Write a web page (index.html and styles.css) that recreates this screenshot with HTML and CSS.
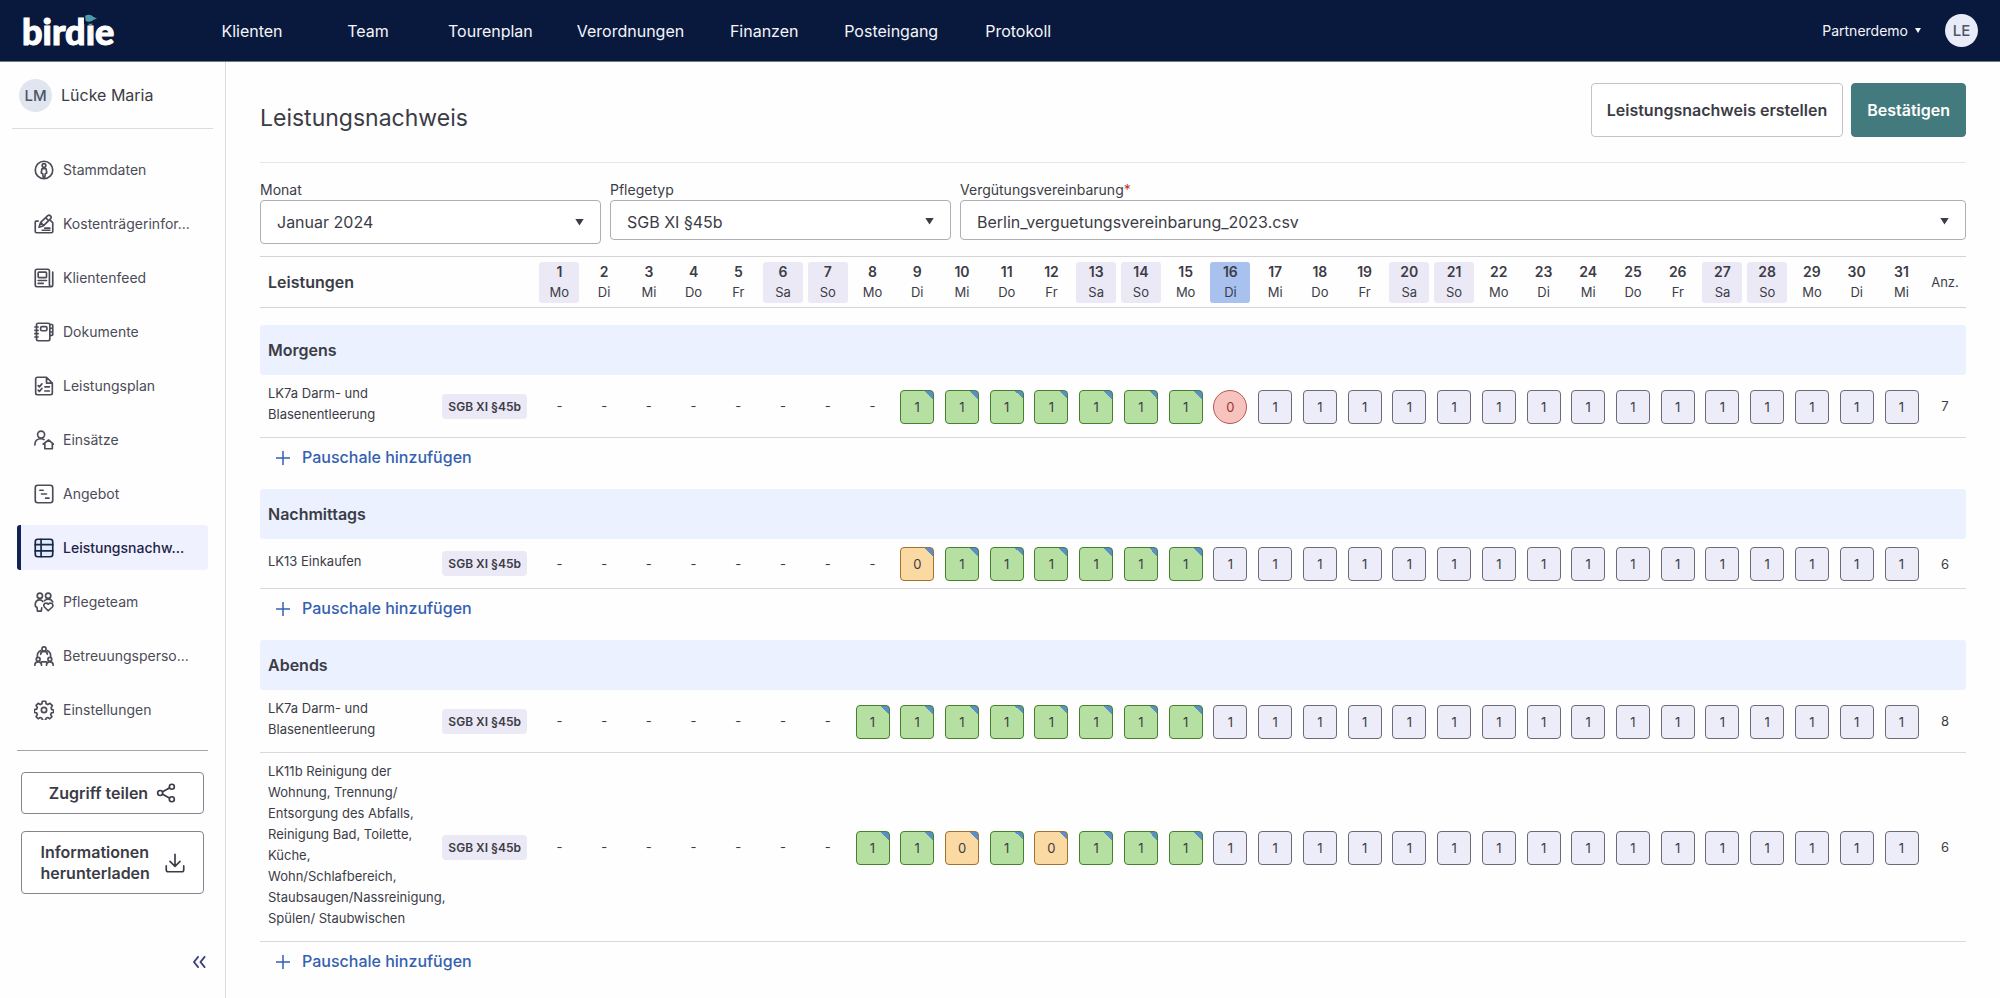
FILE: index.html
```
<!DOCTYPE html>
<html lang="de">
  <head>
    <meta charset="UTF-8" />
    <meta name="viewport" content="width=device-width, initial-scale=1.0" />
    <title>Leistungsnachweis - birdie</title>

    <link rel="stylesheet" href="styles.css">
  </head>
  <body>
    <header class="topbar">
      <a href="#" class="logo">birdie<svg class="logo_bird" viewBox="0 0 12 9"><path class="logo_bird_bg" d="M0 0h10v9H0z"/><path d="M1 1.500C4 0 7 .5 8.500 2.500L12 4 8.500 5.500C7 7.500 3 7.500 1.500 6z"/></svg></a>
      <nav class="main_nav">
        <a href="#">Klienten</a>
        <a href="#">Team</a>
        <a href="#">Tourenplan</a>
        <a href="#">Verordnungen</a>
        <a href="#">Finanzen</a>
        <a href="#">Posteingang</a>
        <a href="#">Protokoll</a>
      </nav>
      <button class="account" type="button">Partnerdemo <span class="arrow arrow_small"></span></button>
      <span class="avatar avatar_user">LE</span>
    </header>

    <div class="page">
      <aside class="sidebar">
        <div class="client">
          <span class="avatar">LM</span>
          <span>Lücke Maria</span>
        </div>

        <nav class="side_nav">
          <a href="#">
            <svg viewBox="0 0 24 24"><circle cx="12" cy="12" r="10.500"/><circle cx="12" cy="6.500" r="2.200"/><path d="M9.500 10.500h5l.8 5-1.800 1-.5 4h-2l-.5-4-1.800-1z"/></svg>
            Stammdaten
          </a>
          <a href="#">
            <svg viewBox="0 0 24 24"><path d="M5 8.500H2.500a1 1 0 0 0-1 1V21a1.500 1.500 0 0 0 1.500 1.500h18a1.500 1.500 0 0 0 1.500-1.500V10.500L20 8"/><path d="M6 16l2-6 8.500-8a2.500 2.500 0 0 1 3.500 3.500L11.500 14zM8 10l3.500 4M14 4.500l3.500 3.500M13 17h6M10 19.500h9"/></svg>
            Kostenträgerinfor...
          </a>
          <a href="#">
            <svg viewBox="0 0 24 24"><path d="M22.500 5v15a2.500 2.500 0 0 1-2.500 2.500H3.500a2 2 0 0 1-2-2v-17a2 2 0 0 1 2-2h13a2 2 0 0 1 2 2V20a2 2 0 0 0 2 2"/><rect x="5" y="5" width="10" height="6.500" rx="1"/><path d="M5 15h10M5 18.500h6"/></svg>
            Klientenfeed
          </a>
          <a href="#">
            <svg viewBox="0 0 24 24"><rect x="3" y="1.500" width="16" height="21" rx="2"/><path d="M1 6h4M1 10h4M1 14h4M1 18h4M19 3h2.500a1 1 0 0 1 1 1v11a1 1 0 0 1-1 1H19M19 7.500h3.500M19 12h3.500"/><rect x="8" y="5.500" width="7.500" height="5" rx="1.500"/></svg>
            Dokumente
          </a>
          <a href="#">
            <svg viewBox="0 0 24 24"><path d="M15 1.500H4a2 2 0 0 0-2 2v17a2 2 0 0 0 2 2h16a2 2 0 0 0 2-2V8.500zM15 1.500v7h7M5 11.500l1.500 1.500 3-3.500M5 17l1.500 1.500 3-3.500M13 13h5.500M13 18h5.500"/></svg>
            Leistungsplan
          </a>
          <a href="#">
            <svg viewBox="0 0 24 24"><circle cx="8.500" cy="5.500" r="4.200"/><path d="M1 18c0-5 3-7.500 7.500-7.500 1.500 0 2.500.3 3.500 1M11 17l6.500-5 6 5M13 16v6.500h9V16"/></svg>
            Einsätze
          </a>
          <a href="#">
            <svg viewBox="0 0 24 24"><rect x="1.500" y="1.500" width="21" height="21" rx="3"/><path d="M7 7.500h4M9 12h6M14 17h4"/></svg>
            Angebot
          </a>
          <a href="#" class="active" aria-current="page">
            <svg viewBox="0 0 24 24"><rect x="1.500" y="1.500" width="21" height="21" rx="3"/><path d="M1.500 8h21M1.500 15.500h21M8.500 1.500v21"/></svg>
            Leistungsnachw...
          </a>
          <a href="#">
            <svg viewBox="0 0 24 24"><circle cx="7" cy="4.500" r="3.200"/><circle cx="17" cy="4.500" r="3.200"/><path d="M10.500 11.500C9.500 10 8.500 9.500 7 9.500c-3 0-5.500 2-5.500 6 0 1.500.5 2.500 2 2.500l.7 5h4.500l.6-4M12.500 10.500c1-1 3-2 4.500-2 2.500 0 4.500 1.500 5.500 3.500M17 22.500l-4.500-4.500c-2.500-3 1.500-6.500 4.500-3.500 3-3 7.500.5 5 3.500z"/></svg>
            Pflegeteam
          </a>
          <a href="#">
            <svg viewBox="0 0 24 24"><circle cx="12" cy="3.500" r="2.500"/><circle cx="5" cy="16" r="2.300"/><circle cx="19" cy="16" r="2.300"/><path d="M8 10c0-2 1.800-3.500 4-3.500s4 1.500 4 3.500M1 23c0-2.500 1.800-4 4-4s4 1.500 4 4M15 23c0-2.500 1.800-4 4-4s4 1.500 4 4M8 5.500C5 7 3.800 9.500 4 12.500M16 5.500c3 1.500 4.200 4 4 7M9 19h6"/></svg>
            Betreuungsperso...
          </a>
          <a href="#">
            <svg viewBox="0 0 24 24"><circle cx="12" cy="12" r="3.200"/><path d="M10 1.500h4l.5 3 2 1 2.700-1.500 2.800 2.800-1.500 2.700.8 2 2.200.5v3l-2.700.5-.8 2 1.500 2.500-2.500 2.500-2.500-1.500-2 .8-.5 2.700h-4l-.5-2.700-2-.8-2.500 1.500L2.500 20l1.500-2.500-.8-2-2.700-.5v-3.500l2.700-.5.8-2L2.500 6.500 5 4l2.500 1.500 2-1z"/></svg>
            Einstellungen
          </a>
        </nav>

        <div class="side_actions">
          <button class="btn btn_side" type="button">
            Zugriff teilen
            <svg viewBox="0 0 24 24"><circle cx="5" cy="12" r="3"/><circle cx="19" cy="4.500" r="3"/><circle cx="19" cy="19.500" r="3"/><path d="M8 10.500l8-4.500M8 13.500l8 4.500"/></svg>
          </button>
          <button class="btn btn_side btn_download" type="button">
            <span>Informationen herunterladen</span>
            <svg viewBox="0 0 24 24"><path d="M12 1.500v14M6 10l6 6 6-6M1.500 15.500V20a2.500 2.500 0 0 0 2.500 2.500h16a2.500 2.500 0 0 0 2.500-2.500v-4.500"/></svg>
          </button>
        </div>

        <button class="collapse" type="button" aria-label="Menü einklappen">
          <svg viewBox="0 0 14 12"><path d="M6 1L2 6l4 5M12.500 1l-4 5 4 5"/></svg>
        </button>
      </aside>

      <main class="content">
        <div class="title_row">
          <h1>Leistungsnachweis</h1>
          <button class="btn" type="button">Leistungsnachweis erstellen</button>
          <button class="btn btn_primary" type="button">Bestätigen</button>
        </div>

        <form class="filters">
          <div class="field field_month">
            <label for="month">Monat</label>
            <div class="select">
              <select id="month"><option>Januar 2024</option></select>
              <span class="arrow"></span>
            </div>
          </div>
          <div class="field">
            <label for="type">Pflegetyp</label>
            <div class="select">
              <select id="type"><option>SGB XI §45b</option></select>
              <span class="arrow"></span>
            </div>
          </div>
          <div class="field">
            <label for="agreement">Vergütungsvereinbarung<span class="required">*</span></label>
            <div class="select">
              <select id="agreement"><option>Berlin_verguetungsvereinbarung_2023.csv</option></select>
              <span class="arrow"></span>
            </div>
          </div>
        </form>

        <table class="services">
          <colgroup>
            <col class="col_name" />
            <col class="col_type" />
            <col span="31" />
            <col class="col_total" />
          </colgroup>
          <thead>
            <tr id="days"></tr>
          </thead>
        </table>
      </main>
    </div>

    <script>
      const weekdays = ["Mo", "Di", "Mi", "Do", "Fr", "Sa", "So"];
      const marked = [1, 6, 7, 13, 14, 20, 21, 27, 28];
      const today = 16;

      // one character per day: - nothing, g done, o missed, r cancelled, p planned
      const groups = [
        {
          name: "Morgens",
          rows: [
            ["LK7a Darm- und Blasenentleerung", "--------gggggggrppppppppppppppp", 7],
          ],
        },
        {
          name: "Nachmittags",
          rows: [["LK13 Einkaufen", "--------oggggggpppppppppppppppp", 6]],
        },
        {
          name: "Abends",
          rows: [
            ["LK7a Darm- und Blasenentleerung", "-------ggggggggpppppppppppppppp", 8],
            [
              "LK11b Reinigung der Wohnung, Trennung/ Entsorgung des Abfalls, Reinigung Bad, Toilette, Küche, Wohn/Schlafbereich, Staubsaugen/Nassreinigung, Spülen/ Staubwischen",
              "-------ggogogggpppppppppppppppp",
              6,
            ],
          ],
        },
      ];

      const states = { g: "done", o: "missed", r: "cancelled", p: "planned" };

      function renderHead() {
        let html = `<th class="services_title" colspan="2" scope="col">Leistungen</th>`;
        for (let day = 1; day <= 31; day++) {
          let cls = "day";
          if (marked.includes(day)) cls += " day_marked";
          if (day === today) cls += " day_today";
          html += `<th scope="col"><div class="${cls}"><b>${day}</b>${weekdays[(day - 1) % 7]}</div></th>`;
        }
        html += `<th class="total" scope="col">Anz.</th>`;
        document.getElementById("days").innerHTML = html;
      }

      function renderCell(code) {
        if (code === "-") return `<td class="empty">-</td>`;
        const value = code === "o" || code === "r" ? 0 : 1;
        const edited = code === "g" || code === "o" ? " edited" : "";
        return `<td><button type="button" class="visit ${states[code]}${edited}">${value}</button></td>`;
      }

      function renderGroup(group) {
        const body = document.createElement("tbody");
        let html = `<tr><th class="group" colspan="34" scope="rowgroup">${group.name}</th></tr>`;
        for (const [name, codes, total] of group.rows) {
          html += `<tr class="service">
            <th class="name" scope="row">${name}</th>
            <td class="type"><span class="badge">SGB XI §45b</span></td>
            ${[...codes].map(renderCell).join("")}
            <td class="total">${total}</td>
          </tr>`;
        }
        html += `<tr><td class="add_row" colspan="34">
          <button type="button" class="add">
            <svg viewBox="0 0 14 14"><path d="M7 0v14M0 7h14"/></svg>
            Pauschale hinzufügen
          </button>
        </td></tr>`;
        body.innerHTML = html;
        document.querySelector(".services").append(body);
      }

      renderHead();
      groups.forEach(renderGroup);
    </script>
  </body>
</html>
```

FILE: styles.css
```
*,
*::before,
*::after {
  box-sizing: border-box;
}
html {
  font-family: Inter, "Liberation Sans", sans-serif;
  font-size: 16px;
  color: #3c3c46;
}
body {
  min-height: 100vh;
  display: flex;
  flex-direction: column;
  margin: 0;
  background: #fefefe;
}
a {
  color: inherit;
  text-decoration: none;
}
button,
select {
  font: inherit;
  color: inherit;
  cursor: pointer;
}
svg {
  flex: none;
  fill: none;
  stroke: currentColor;
  stroke-width: 2;
  stroke-linecap: round;
  stroke-linejoin: round;
}

/* top bar */
.topbar {
  display: flex;
  align-items: center;
  height: 62px;
  padding: 0 22px;
  background: #09193d;
  border-bottom: 1px solid #6f7686;
  color: #f4f6fb;
}
.logo {
  position: relative;
  width: 172px;
  font-family: Lato, sans-serif;
  font-size: 36px;
  font-weight: 900;
  line-height: 40px;
  color: #fff;
  -webkit-text-stroke: 1px #fff;
}
.logo_bird {
  position: absolute;
  top: 3px;
  left: 62px;
  width: 13px;
  height: 10px;
  fill: #4f9aa8;
  stroke: none;
}
.logo_bird_bg {
  fill: #09193d;
}
.main_nav {
  display: flex;
  flex: 1;
}
.main_nav a {
  min-width: 116px;
  padding: 0 22px;
  text-align: center;
}
.account {
  display: flex;
  align-items: center;
  gap: 7px;
  margin-right: 24px;
  padding: 0;
  border: 0;
  background: none;
  font-size: 14px;
}
.arrow {
  width: 9px;
  height: 7px;
  background: currentColor;
  clip-path: polygon(0 0, 100% 0, 50% 100%);
}
.arrow_small {
  width: 6px;
  height: 5px;
}
.avatar {
  display: grid;
  place-items: center;
  width: 33px;
  height: 33px;
  border-radius: 50%;
  background: #e1e5ef;
  color: #4d5468;
  font-size: 15px;
  font-weight: 500;
}
.avatar_user {
  background: #e8ebf8;
}

/* sidebar */
.page {
  display: flex;
  flex: 1;
}
.sidebar {
  display: flex;
  flex-direction: column;
  flex: none;
  width: 226px;
  padding: 0 12px;
  border-right: 1px solid #dcdce0;
}
.client {
  display: flex;
  align-items: center;
  gap: 9px;
  height: 67px;
  padding: 0 7px;
  border-bottom: 1px solid #dcdce0;
}
.side_nav {
  display: flex;
  flex-direction: column;
  gap: 9px;
  margin: 0 5px;
  padding: 18px 0;
  border-bottom: 1px solid #a3a3ab;
}
.side_nav a {
  display: flex;
  align-items: center;
  gap: 9px;
  height: 45px;
  padding-left: 13px;
  border-left: 4px solid transparent;
  border-radius: 3px;
  color: #4c4c58;
  font-size: 14px;
  white-space: nowrap;
}
.side_nav a.active {
  border-color: #132352;
  background: #f0f1ff;
  color: #1d2545;
  font-weight: 500;
}
.side_nav svg {
  width: 20px;
  height: 20px;
}
.side_nav .active svg {
  fill: #dcecff;
}
.side_actions {
  display: flex;
  flex-direction: column;
  gap: 17px;
  padding: 21px 9px;
}
.btn {
  display: flex;
  align-items: center;
  justify-content: center;
  height: 54px;
  padding: 0 15px;
  border: 1px solid #c4c2c8;
  border-radius: 4px;
  background: #fff;
  font-weight: 600;
}
.btn_primary {
  border-color: #437a7d;
  background: #437a7d;
  color: #fff;
}
.btn_side {
  gap: 8px;
  height: 42px;
  padding: 0 12px;
  border-color: #85858f;
  line-height: 21px;
}
.btn_side svg {
  width: 20px;
  height: 20px;
}
.btn_download {
  gap: 12px;
  height: 63px;
  text-align: left;
}
.btn_download span {
  width: 112px;
}
.collapse {
  align-self: flex-end;
  margin: 41px 7px 0 0;
  padding: 0;
  border: 0;
  background: none;
  color: #3b3f80;
  line-height: 0;
}
.collapse svg {
  width: 14px;
  height: 12px;
}

/* main area */
.content {
  flex: 1;
  min-width: 0;
  padding: 0 34px 20px;
}
.title_row {
  display: flex;
  align-items: center;
  gap: 8px;
  height: 101px;
  border-bottom: 1px solid #e6e6e9;
}
h1 {
  flex: 1;
  margin: 12px 0 0;
  font-size: 23px;
  font-weight: 400;
}
.title_row .btn {
  margin-bottom: 4px;
}
.filters {
  display: grid;
  grid-template-columns: 20fr 20fr 59fr;
  gap: 9px;
  align-items: start;
  padding: 17px 0 12px;
}
.field label {
  display: block;
  margin-bottom: 1px;
  font-size: 14px;
  line-height: 19px;
}
.required {
  color: #c0392b;
}
.select {
  display: grid;
  align-items: center;
}
.select select,
.select .arrow {
  grid-area: 1 / 1;
}
.select select {
  width: 100%;
  height: 40px;
  padding: 3px 40px 0 16px;
  appearance: none;
  border: 1px solid #aeaeb4;
  border-radius: 4px;
  background: #fff;
}
.select .arrow {
  justify-self: end;
  margin: 2px 17px 0 0;
  pointer-events: none;
}
.field_month .select select {
  height: 44px;
  padding-top: 0;
}
.field_month .select .arrow {
  margin-top: 0;
}

/* services table */
.services {
  width: 100%;
  min-width: 1500px;
  table-layout: fixed;
  border-collapse: separate;
  border-spacing: 0;
  font-size: 13px;
  text-align: center;
}
.services th,
.services td {
  padding: 0;
  font-weight: 400;
}
.col_name {
  width: 172px;
}
.col_type {
  width: 105px;
}
.col_total {
  width: 42px;
}
.services thead th {
  height: 52px;
  border-top: 1px solid #d4d4d8;
  border-bottom: 1px solid #d4d4d8;
}
.services thead .services_title {
  padding-left: 8px;
  font-size: 16px;
  font-weight: 600;
  text-align: left;
}
.day {
  width: 40px;
  margin: 0 auto;
  border-radius: 3px;
  line-height: 21px;
}
.day b {
  display: block;
  font-size: 14px;
  font-weight: 600;
  line-height: 20px;
}
.day_marked {
  background: #ebe9f6;
}
.day_today {
  background: #a9c1ee;
}
thead::after {
  content: "";
  display: block;
  height: 17px;
}
.services .group {
  height: 50px;
  padding-left: 8px;
  border-radius: 3px;
  background: #ebf1ff;
  font-size: 16px;
  font-weight: 600;
  text-align: left;
}
.service th,
.service td {
  border-bottom: 1px solid #d9d9dd;
}
.services .name {
  padding: 8px 0 12px 8px;
  line-height: 21px;
  text-align: left;
}
.services .type {
  text-align: right;
  padding-right: 10px;
}
.badge {
  display: inline-block;
  padding: 0 6px;
  border-radius: 4px;
  background: #ebe9f6;
  font-size: 12px;
  font-weight: 600;
  line-height: 25px;
  white-space: nowrap;
}
.visit {
  display: block;
  width: 34px;
  height: 34px;
  margin: 8px auto 7px;
  padding: 0;
  border: 1px solid #6b6a76;
  border-radius: 4px;
  background: #ecedf8;
}
.done {
  border-color: #47802c;
  background-color: #b6e0a2;
}
.missed {
  border-color: #a0712f;
  background-color: #fad9a3;
}
.cancelled {
  border-color: #b5584f;
  border-radius: 50%;
  background-color: #f6c3be;
  color: #a3352c;
}
.edited {
  background-image: linear-gradient(to top right, transparent 50%, #5b8fc9 50%);
  background-position: top right;
  background-repeat: no-repeat;
  background-size: 8px 8px;
}
.services .add_row {
  height: 51px;
  padding: 9px 0 21px 16px;
}
.add {
  display: flex;
  align-items: center;
  gap: 12px;
  padding: 0;
  border: 0;
  background: none;
  color: #3560b0;
  font-size: 16px;
  font-weight: 500;
  line-height: 21px;
}
.add svg {
  width: 14px;
  height: 14px;
  stroke-width: 1.5;
}

@media (max-width: 1100px) {
  .content {
    overflow-x: auto;
  }
}
```
